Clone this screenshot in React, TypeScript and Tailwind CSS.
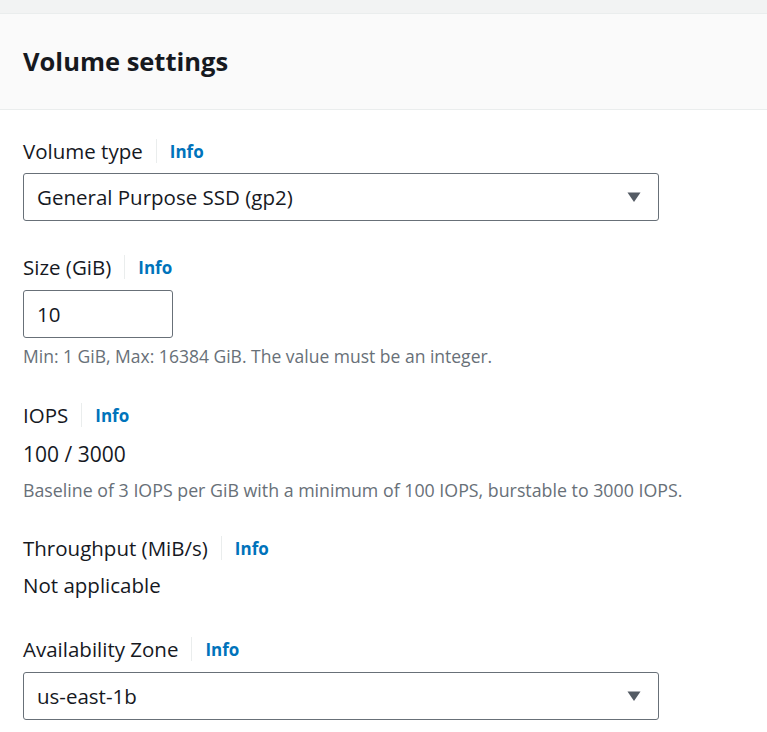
import React from 'react';

const font = { fontFamily: '"Open Sans", "Noto Sans", Arial, sans-serif' };

function Label({ text }: { text: string }) {
  return (
    <div className="flex items-center h-[24px] leading-[24px]">
      <span className="text-[20.5px] text-[#16191f]">{text}</span>
      <span className="mx-[13px] h-[24px] w-px bg-[#eaeded]" />
      <span className="text-[17px] font-bold text-[#0073bb] mt-[2px]">Info</span>
    </div>
  );
}

function Caret() {
  return (
    <svg width="14" height="12" viewBox="0 0 14 12" className="shrink-0">
      <path d="M0.5 1.5 L13.5 1.5 L7 11 Z" fill="#545b64" />
    </svg>
  );
}

function Select({ value }: { value: string }) {
  return (
    <div className="flex items-center justify-between w-[636px] h-[48px] border border-[#687078] rounded-[3px] bg-white pl-[13px] pr-[17px]">
      <span className="text-[20.5px] leading-[24px] text-[#16191f]">{value}</span>
      <Caret />
    </div>
  );
}

export default function App() {
  return (
    <div className="min-h-screen bg-white" style={font}>
      <div className="h-[14px] bg-[#f2f3f3] border-b border-[#eaeded]" />
      <div className="h-[96px] bg-[#fafafa] border-b border-[#eaeded] flex items-center pl-[23px]">
        <h2 className="text-[25.5px] leading-[32px] font-bold text-[#16191f] -mt-[2px]">Volume settings</h2>
      </div>

      <div className="pl-[23px] pt-[29px]">
        <Label text="Volume type" />
        <div className="mt-[10px]">
          <Select value="General Purpose SSD (gp2)" />
        </div>

        <div className="mt-[34px]">
          <Label text="Size (GiB)" />
        </div>
        <div className="mt-[11px] w-[150px] h-[48px] border border-[#687078] rounded-[3px] flex items-center pl-[13px] text-[20.5px] leading-[24px] text-[#16191f]">
          10
        </div>
        <p className="mt-[8px] text-[17.5px] leading-[20px] text-[#687078]">
          Min: 1 GiB, Max: 16384 GiB. The value must be an integer.
        </p>

        <div className="mt-[37px]">
          <Label text="IOPS" />
        </div>
        <p className="mt-[15px] text-[21px] leading-[24px] text-[#16191f]">100 / 3000</p>
        <p className="mt-[14px] text-[17.8px] leading-[20px] text-[#687078]">
          Baseline of 3 IOPS per GiB with a minimum of 100 IOPS, burstable to 3000 IOPS.
        </p>

        <div className="mt-[36px]">
          <Label text="Throughput (MiB/s)" />
        </div>
        <p className="mt-[13px] text-[20.5px] leading-[24px] text-[#16191f]">Not applicable</p>

        <div className="mt-[40px]">
          <Label text="Availability Zone" />
        </div>
        <div className="mt-[11px]">
          <Select value="us-east-1b" />
        </div>
      </div>
    </div>
  );
}
